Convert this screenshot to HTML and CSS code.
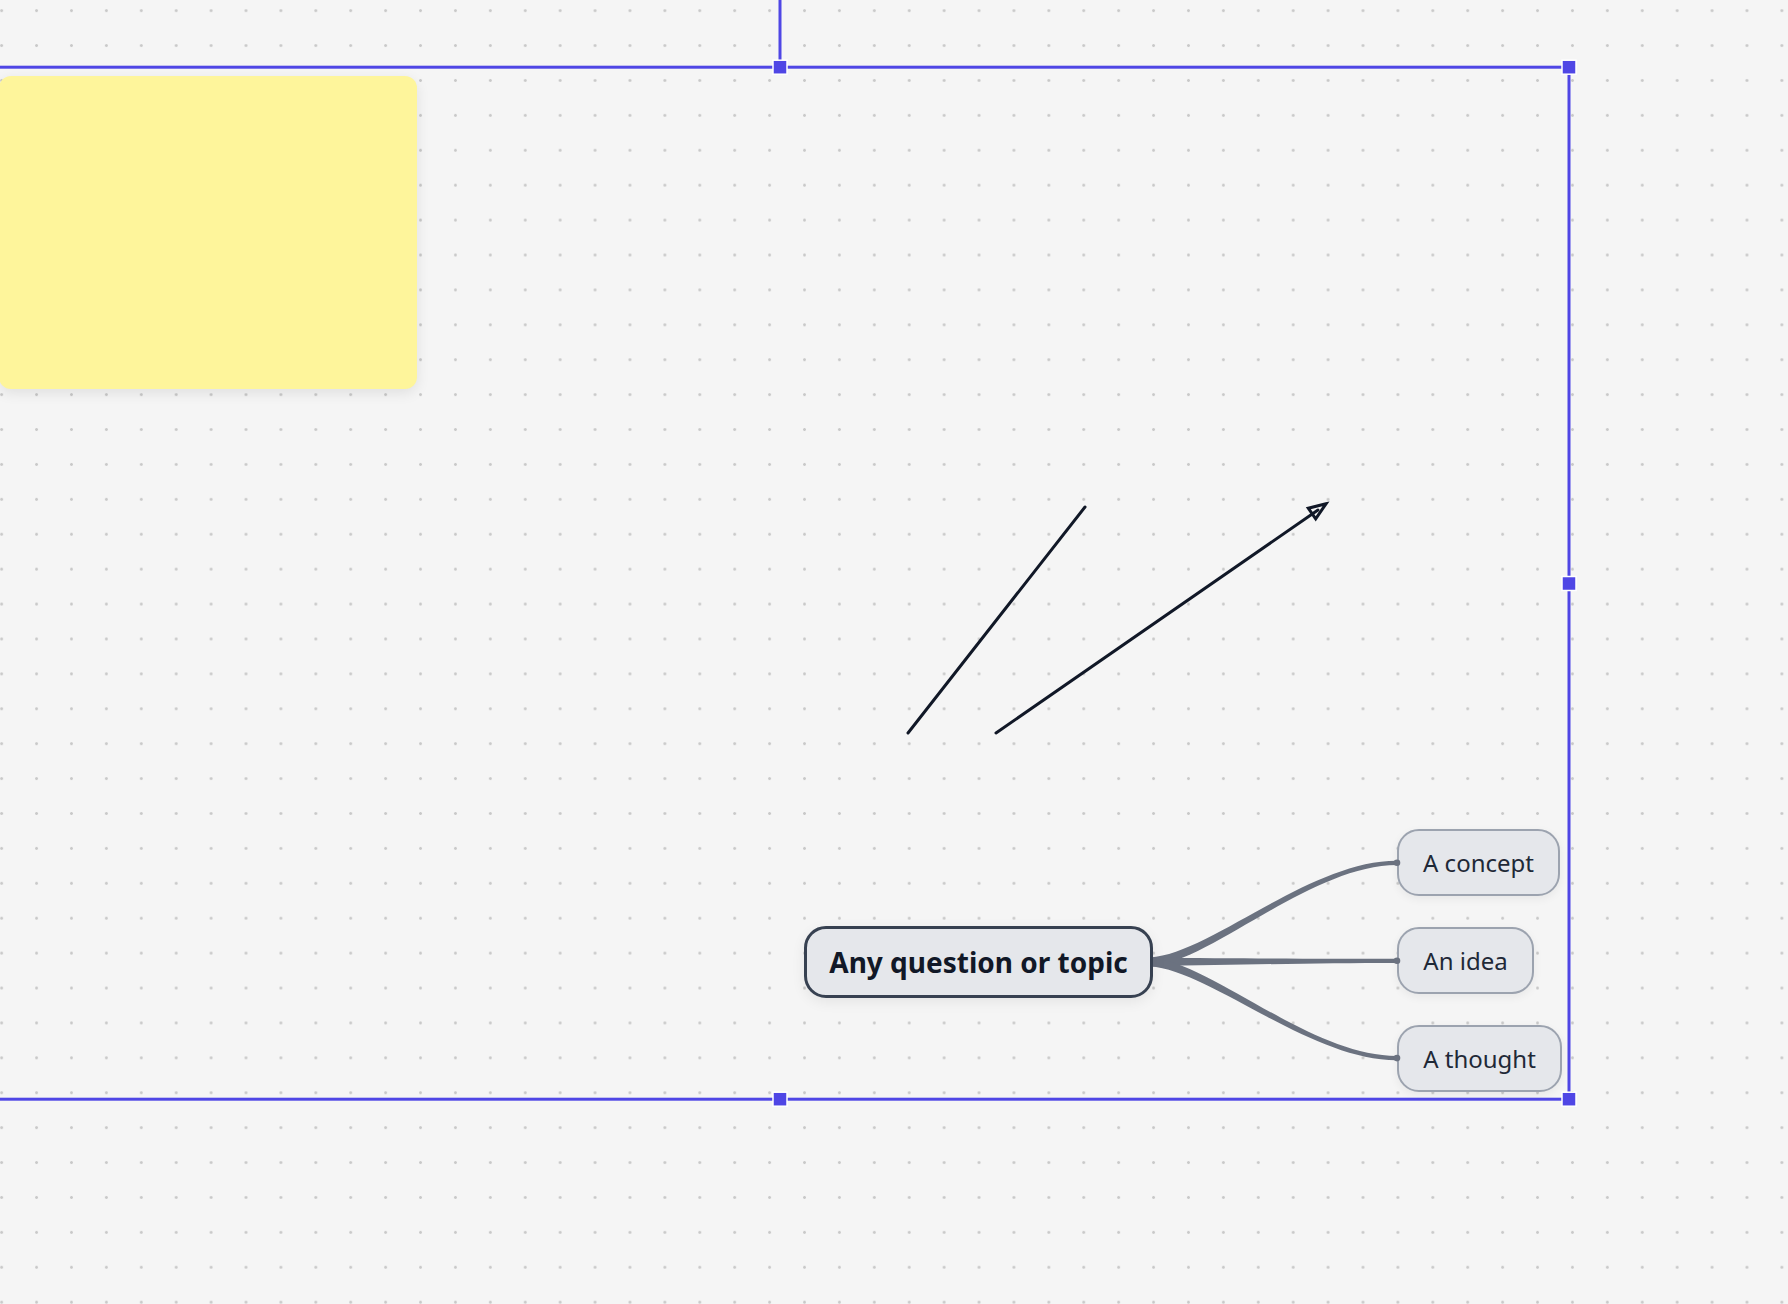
FILE: index.html
```html
<!DOCTYPE html>
<html>
<head>
<meta charset="utf-8">
<link rel="stylesheet" href="styles.css">
</head>
<body>
<div class="canvas">
  <div class="sticky"></div>

  <svg class="layer" width="1788" height="1304" viewBox="0 0 1788 1304">
    <!-- edges of mind map -->
    <path class="edge" d="M1150 957.5 C1210 954, 1310 860.5, 1397 860.8 L1397 865 C1310 865.5, 1210 962.5, 1150 966.5 Z"/>
    <path class="edge" d="M1150 957.8 C1250 958.5, 1320 958.8, 1397 958.8 L1397 963 C1320 963, 1250 964.5, 1150 966.2 Z"/>
    <path class="edge" d="M1150 957.5 C1210 961.5, 1310 1055.8, 1397 1056 L1397 1060.2 C1310 1060.5, 1210 970, 1150 966.5 Z"/>

    <!-- drawn lines -->
    <line class="ink" x1="908" y1="733" x2="1085" y2="507"/>
    <line class="ink" x1="996" y1="733" x2="1318" y2="510"/>
    <polygon class="head" points="1326,503.8 1308.3,508.2 1315.7,518.8"/>
  </svg>

  <div class="node root">Any question or topic</div>
  <div class="node child c1">A concept</div>
  <div class="node child c2">An idea</div>
  <div class="node child c3">A thought</div>

  <svg class="layer top" width="1788" height="1304" viewBox="0 0 1788 1304">
    <circle class="pin" cx="1397" cy="862.8" r="3.3"/>
    <circle class="pin" cx="1397" cy="960.8" r="3.3"/>
    <circle class="pin" cx="1397" cy="1058.1" r="3.3"/>

    <!-- selection frame -->
    <line class="sel" x1="780" y1="0" x2="780" y2="61"/>
    <rect class="selbox" x="-9" y="67.2" width="1578" height="1032"/>
    <rect class="handle" x="773" y="60.2" width="14" height="14"/>
    <rect class="handle" x="1562" y="60.2" width="14" height="14"/>
    <rect class="handle" x="1562" y="576.5" width="14" height="14"/>
    <rect class="handle" x="1562" y="1092.2" width="14" height="14"/>
    <rect class="handle" x="773" y="1092.2" width="14" height="14"/>
  </svg>
</div>
</body>
</html>
```

FILE: styles.css
```css
html, body {
  margin: 0;
  padding: 0;
  background: #f5f5f5;
  overflow: hidden;
}

.canvas {
  position: relative;
  width: 1788px;
  height: 1304px;
  background-color: #f5f5f5;
  background-image: radial-gradient(circle at center, #c9c9c9 0, #c9c9c9 1.1px, rgba(201,201,201,0) 1.7px);
  background-size: 34.92px 34.92px;
  background-position: -15.8px -6.8px;
  font-family: "Noto Sans", "Open Sans", sans-serif;
  overflow: hidden;
}

.sticky {
  position: absolute;
  left: -1px;
  top: 76px;
  width: 418px;
  height: 313px;
  background: #fef59b;
  border-radius: 12px;
  box-shadow: 0 4px 14px rgba(0, 0, 0, 0.09);
}

.layer {
  position: absolute;
  left: 0;
  top: 0;
  overflow: visible;
}

.edge {
  fill: #6b7280;
}

.ink {
  stroke: #111827;
  stroke-width: 3;
  stroke-linecap: round;
}

.head {
  fill: none;
  stroke: #111827;
  stroke-width: 3;
  stroke-linejoin: miter;
}

.pin {
  fill: #6b7280;
}

.node {
  position: absolute;
  box-sizing: border-box;
  display: flex;
  align-items: center;
  justify-content: center;
  background: #e5e7eb;
  white-space: nowrap;
}

.root {
  left: 804px;
  top: 926px;
  width: 349px;
  height: 72px;
  border: 3px solid #374151;
  border-radius: 22px;
  font-size: 28px;
  font-weight: 700;
  color: #111827;
  box-shadow: 0 4px 14px rgba(0, 0, 0, 0.07);
}

.child {
  left: 1397px;
  height: 67px;
  border: 2px solid #9ca3af;
  border-radius: 22px;
  font-size: 24px;
  font-weight: 400;
  color: #1f2937;
  box-shadow: 0 3px 10px rgba(0, 0, 0, 0.06);
}

.c1 { top: 829px; width: 163px; }
.c2 { top: 927px; width: 137px; }
.c3 { top: 1025px; width: 165px; }

.sel {
  stroke: #4f46e5;
  stroke-width: 3;
}

.selbox {
  fill: none;
  stroke: #4f46e5;
  stroke-width: 3;
}

.handle {
  fill: #4f46e5;
  stroke: #ffffff;
  stroke-width: 1.5;
}
```
